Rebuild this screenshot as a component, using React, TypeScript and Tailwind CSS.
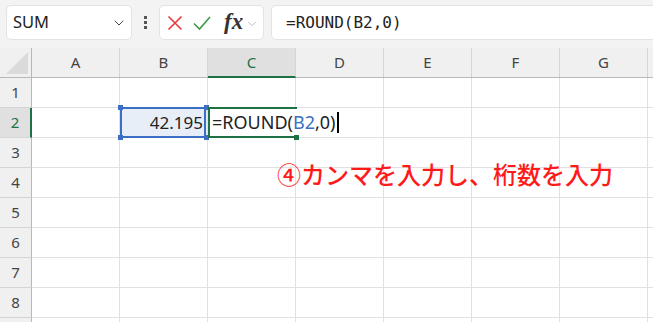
import { ChevronDown } from "lucide-react";

const cols = ["A", "B", "C", "D", "E", "F", "G", "H"];
const rows = [1, 2, 3, 4, 5, 6, 7, 8, 9];

function Handle({ className }: { className: string }) {
    return <div className={"absolute w-[5px] h-[5px] " + className}></div>;
}

function Toolbar() {
    return (
        <div className="flex items-start h-[48px] pl-[6px] pt-[5px] bg-[#f3f3f3] overflow-hidden">
            <div className="flex items-center justify-between w-[126px] h-[35px] shrink-0 bg-white border border-[#e3e3e3] rounded-[5px] pl-[6px] pr-[4px]">
                <span className="text-[16.5px] text-[#222]">SUM</span>
                <ChevronDown size={16} strokeWidth={1.5} className="text-[#444]" />
            </div>
            <div className="flex flex-col items-center justify-center gap-[2px] w-[27px] h-[35px] shrink-0">
                <div className="w-[3px] h-[3px] bg-[#555]"></div>
                <div className="w-[3px] h-[3px] bg-[#555]"></div>
                <div className="w-[3px] h-[3px] bg-[#555]"></div>
            </div>
            <div className="flex items-center w-[105px] h-[35px] shrink-0 bg-white border border-[#e3e3e3] rounded-[5px] pl-[7px]">
                <svg width="16" height="16" viewBox="0 0 16 16" className="mr-[10px]">
                    <path d="M1.5 1.5 L14.5 14.5 M14.5 1.5 L1.5 14.5" stroke="#e5393b" strokeWidth="1.6" fill="none" />
                </svg>
                <svg width="18" height="16" viewBox="0 0 18 16" className="mr-[13px]">
                    <path d="M1 8.5 L6.5 14 L17 2" stroke="#3a9b45" strokeWidth="1.6" fill="none" />
                </svg>
                <span className="text-[23px] italic font-bold text-[#333] leading-none mb-[3px]" style={{ fontFamily: '"Liberation Serif", serif' }}>fx</span>
                <ChevronDown size={14} strokeWidth={1.3} className="text-[#aaa] ml-[2px] mt-[2px]" />
            </div>
            <div className="flex items-center w-[420px] h-[35px] shrink-0 ml-[7px] bg-white border border-[#e3e3e3] rounded-[5px] pl-[14px]">
                <span className="text-[16px] text-[#222]" style={{ fontFamily: '"DejaVu Sans Mono", monospace' }}>=ROUND(B2,0)</span>
            </div>
        </div>
    );
}

function HeaderRow() {
    return (
        <div className="flex h-[30px] bg-[#f0f0f0] border-b border-[#b8b8b8]">
            <div className="relative w-[32px] shrink-0 border-r border-[#b8b8b8]">
                <svg width="22" height="22" viewBox="0 0 22 22" className="absolute right-[3px] bottom-[3px]">
                    <path d="M22 0 L22 22 L0 22 Z" fill="#dadada" />
                </svg>
            </div>
            {cols.map((c) => (
                <div
                    key={c}
                    className={
                        c === "C"
                            ? "flex items-center justify-center w-[88px] shrink-0 border-r border-[#d4d4d4] bg-[#e0e0e0] text-[#1e7145] border-b-2 border-b-[#1e7145] mb-[-1px]"
                            : "flex items-center justify-center w-[88px] shrink-0 border-r border-[#d4d4d4] text-[#444]"
                    }
                >
                    <span className="text-[15px]">{c}</span>
                </div>
            ))}
        </div>
    );
}

function Cell({ row, col }: { row: number; col: string }) {
    if (row === 2 && col === "B") {
        return (
            <div className="relative flex items-center justify-end w-[88px] shrink-0 bg-[#e8eef8] border-r border-b border-[#e1e1e1] pr-[4px]">
                <span className="text-[17px] text-[#222]">42.195</span>
                <div className="absolute left-0 top-[-1px] right-[1px] bottom-[-1px] border-2 border-[#3a6fc4]"></div>
                <Handle className="bg-[#3a6fc4] left-[-2px] top-[-3px]" />
                <Handle className="bg-[#3a6fc4] right-[-2px] top-[-3px]" />
                <Handle className="bg-[#3a6fc4] left-[-2px] bottom-[-3px]" />
                <Handle className="bg-[#3a6fc4] right-[-2px] bottom-[-3px]" />
            </div>
        );
    }
    if (row === 2 && col === "C") {
        return (
            <div className="relative z-10 flex items-center w-[88px] shrink-0 bg-white border-b border-[#e1e1e1] pl-[4px]">
                <span className="whitespace-nowrap text-[18px] text-[#222] flex items-center">
                    =ROUND(<span className="text-[#3a6fc4]">B2</span>,0)
                    <span className="inline-block w-[1.5px] h-[21px] bg-black ml-[2px]"></span>
                </span>
                <div className="absolute left-0 top-[-1px] right-[-1px] bottom-[-1px] border-2 border-r-0 border-[#1e7145]"></div>
                <Handle className="bg-[#1e7145] right-[-3px] bottom-[-3px]" />
            </div>
        );
    }
    return <div className="w-[88px] shrink-0 border-r border-b border-[#e1e1e1]"></div>;
}

function Grid() {
    return (
        <div className="relative">
            {rows.map((r) => (
                <div key={r} className="flex h-[30px]">
                    <div
                        className={
                            r === 2
                                ? "flex items-center justify-center w-[32px] shrink-0 bg-[#e0e0e0] border-r-2 border-[#1e7145] border-b border-b-[#d4d4d4] text-[#1e7145]"
                                : "flex items-center justify-center w-[32px] shrink-0 bg-[#f0f0f0] border-r border-[#b8b8b8] border-b border-b-[#d4d4d4] text-[#444]"
                        }
                    >
                        {r < 9 && <span className="text-[15px]">{r}</span>}
                    </div>
                    {cols.map((c) => (
                        <Cell key={c} row={r} col={c} />
                    ))}
                </div>
            ))}
            <div
                className="absolute left-[277px] top-[84px] z-20 text-[24px] font-medium text-[#ff1a1a] whitespace-nowrap leading-none"
                style={{ fontFamily: '"Noto Sans CJK JP", sans-serif' }}
            >
                ④カンマを入力し、桁数を入力
            </div>
        </div>
    );
}

export default function App() {
    return (
        <div className="w-[653px] h-[322px] overflow-hidden bg-white" style={{ fontFamily: '"Noto Sans", sans-serif' }}>
            <Toolbar />
            <HeaderRow />
            <Grid />
        </div>
    );
}
